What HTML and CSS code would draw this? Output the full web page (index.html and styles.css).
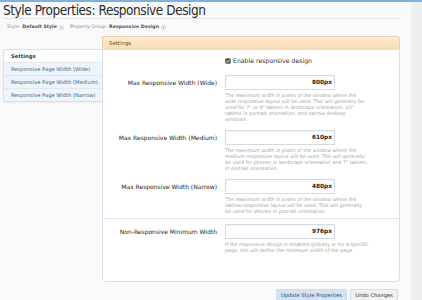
FILE: index.html
```html
<!DOCTYPE html>
<html lang="en">

<head>
  <meta charset="UTF-8">
  <meta name="viewport" content="width=device-width, initial-scale=1.0">
  <title>Style Properties: Responsive Design</title>
  <link rel="stylesheet" href="styles.css">
</head>

<body>
  <div class="top-bar"></div>

  <div class="page">
    <div class="content">
      <div class="title-bar">
        <h1>Style Properties: Responsive Design</h1>
      </div>

      <div class="crumbs">
        <span class="muted">Style:</span> <b>Default Style</b>
        <span class="drop"><svg viewBox="0 0 10 10" width="5" height="5"><circle cx="5" cy="5" r="4.3" fill="#fff" stroke="#a9a9a9" stroke-width="1"/><path d="M3 4.2 L5 6.4 L7 4.2 Z" fill="#777"/></svg></span>
        <span class="muted gap">Property Group:</span> <b>Responsive Design</b>
        <span class="drop"><svg viewBox="0 0 10 10" width="5" height="5"><circle cx="5" cy="5" r="4.3" fill="#fff" stroke="#a9a9a9" stroke-width="1"/><path d="M3 4.2 L5 6.4 L7 4.2 Z" fill="#777"/></svg></span>
      </div>

      <div class="layout">
        <div class="tabs">
          <div class="tabs-head">Settings</div>
          <a href="#">Responsive Page Width (Wide)</a>
          <a href="#">Responsive Page Width (Medium)</a>
          <a href="#">Responsive Page Width (Narrow)</a>
        </div>

        <div class="panel">
          <div class="panel-head">Settings</div>
          <div class="panel-body">
            <div class="row check-row">
              <div class="label"></div>
              <div class="ctrl">
                <label class="check">
                  <svg viewBox="0 0 12 12" width="6" height="6"><rect x="0.5" y="0.5" width="11" height="11" rx="2.5" fill="#555"/><path d="M2.8 6.2 L5 8.4 L9.3 3.6" fill="none" stroke="#fff" stroke-width="1.8"/></svg>
                  Enable responsive design
                </label>
              </div>
            </div>

            <div class="row">
              <div class="label">Max Responsive Width (Wide)</div>
              <div class="ctrl">
                <div class="input">800px</div>
                <p class="explain">The maximum width in pixels of the window where the<br>wide responsive layout will be used. This will generally be<br>used for 7" or 8" tablets in landscape orientation, 10"<br>tablets in portrait orientation, and narrow desktop<br>windows.</p>
              </div>
            </div>

            <div class="row">
              <div class="label">Max Responsive Width (Medium)</div>
              <div class="ctrl">
                <div class="input">610px</div>
                <p class="explain">The maximum width in pixels of the window where the<br>medium responsive layout will be used. This will generally<br>be used for phones in landscape orientation and 7" tablets<br>in portrait orientation.</p>
              </div>
            </div>

            <div class="row">
              <div class="label">Max Responsive Width (Narrow)</div>
              <div class="ctrl">
                <div class="input">480px</div>
                <p class="explain">The maximum width in pixels of the window where the<br>narrow responsive layout will be used. This will generally<br>be used for phones in portrait orientation.</p>
              </div>
            </div>

            <hr class="sep">

            <div class="row">
              <div class="label">Non-Responsive Minimum Width</div>
              <div class="ctrl">
                <div class="input">976px</div>
                <p class="explain">If the responsive design is disabled globally or for a specific<br>page, this will define the minimum width of the page.</p>
              </div>
            </div>
          </div>
        </div>
      </div>

      <div class="buttons">
        <button type="button" class="save-btn">Update Style Properties</button>
        <button type="button" class="undo-btn">Undo Changes</button>
      </div>
    </div>
    <div class="gutter"></div>
  </div>
</body>

</html>
```

FILE: styles.css
```css
body {
  font-family: 'DejaVu Sans', sans-serif;
  margin: 0;
  padding: 0;
  background-color: #efefef;
  color: #333333;
  overflow: hidden;
}

.top-bar {
  height: 2px;
  background-color: #7eb0de;
}

.page {
  display: flex;
}

.content {
  width: 411px;
  background-color: #f9f9fb;
  padding-bottom: 20px;
}

.gutter {
  flex: 1;
}

.title-bar {
  margin: 0 11px 0 3px;
  height: 16px;
  border-bottom: 1px solid #e4e6ea;
}

h1 {
  margin: 0;
  font-family: 'DejaVu Sans Condensed', sans-serif;
  font-weight: normal;
  font-size: 13.5px;
  line-height: 16px;
  letter-spacing: -0.45px;
  color: #2b2b2b;
  white-space: nowrap;
}

.crumbs {
  margin: 4px 0 0 7px;
  font-size: 4.7px;
  line-height: 8px;
  color: #555555;
  display: flex;
  align-items: center;
  gap: 2px;
}

.crumbs .muted {
  color: #8a8a8a;
}

.crumbs .gap {
  margin-left: 4px;
}

.drop svg {
  display: block;
}

.layout {
  display: flex;
  align-items: flex-start;
  margin: 5px 11px 0 3px;
}

.tabs {
  width: 98px;
  margin-top: 13px;
  border: 1px solid #d7e1ea;
  border-right: none;
  border-radius: 3px 0 0 3px;
  background-color: #ffffff;
  font-size: 5.2px;
  box-shadow: 0 1px 2px rgba(0, 0, 0, 0.05);
}

.tabs-head {
  height: 12px;
  line-height: 12px;
  padding-left: 7px;
  font-weight: bold;
  color: #333333;
}

.tabs a {
  display: block;
  height: 12px;
  line-height: 12px;
  padding-left: 7px;
  border-top: 1px solid #dfe7ef;
  background-color: #eef4f9;
  color: #3d6a96;
  text-decoration: none;
  white-space: nowrap;
}

.panel {
  flex: 1;
}

.panel-head {
  height: 12px;
  line-height: 12px;
  padding-left: 6px;
  font-size: 5.4px;
  color: #6b4a24;
  background: linear-gradient(#fdebd0, #f8dcb6);
  border: 1px solid #ecd3ae;
  border-bottom: none;
  border-radius: 0 3px 0 0;
}

.panel-body {
  background-color: #ffffff;
  border: 1px solid #d6e0e8;
  border-radius: 0 0 4px 4px;
  padding: 5px 0 20px 0;
}

.row {
  display: flex;
  margin-bottom: 7px;
}

.label {
  width: 122px;
  flex-shrink: 0;
  padding-right: 8px;
  box-sizing: border-box;
  text-align: right;
  font-size: 6px;
  line-height: 15px;
  color: #222222;
  white-space: nowrap;
}

.check-row {
  margin-bottom: 9px;
}

.check {
  display: flex;
  align-items: center;
  gap: 2px;
  height: 11px;
  font-size: 6.2px;
  color: #333333;
}

.check svg {
  display: block;
}

.ctrl {
  width: 170px;
}

.input {
  width: 110px;
  height: 15px;
  box-sizing: border-box;
  border: 1px solid #d3dae2;
  background-color: #ffffff;
  text-align: right;
  padding-right: 2px;
  font-size: 5.8px;
  font-weight: bold;
  line-height: 13px;
  color: #222222;
  box-shadow: inset 0 1px 1px rgba(0, 0, 0, 0.04);
}

.explain {
  margin: 3px 0 0 0;
  font-size: 4.8px;
  line-height: 6px;
  color: #a3a3a3;
  white-space: nowrap;
}

.sep {
  margin: -4px 0 5px 0;
  border: none;
  border-top: 1px solid #dde4ea;
}

.buttons {
  display: flex;
  justify-content: flex-end;
  gap: 3px;
  margin: 7px 13px 0 0;
}

button {
  font-family: 'DejaVu Sans', sans-serif;
  font-size: 5.2px;
  height: 12px;
  padding: 0 4px;
  border: 1px solid #d5dde5;
  border-radius: 2px;
  cursor: pointer;
}

.save-btn {
  background-color: #d5e3f0;
  color: #2e4e72;
}

.undo-btn {
  background-color: #f1f1f1;
  color: #333333;
}
```
